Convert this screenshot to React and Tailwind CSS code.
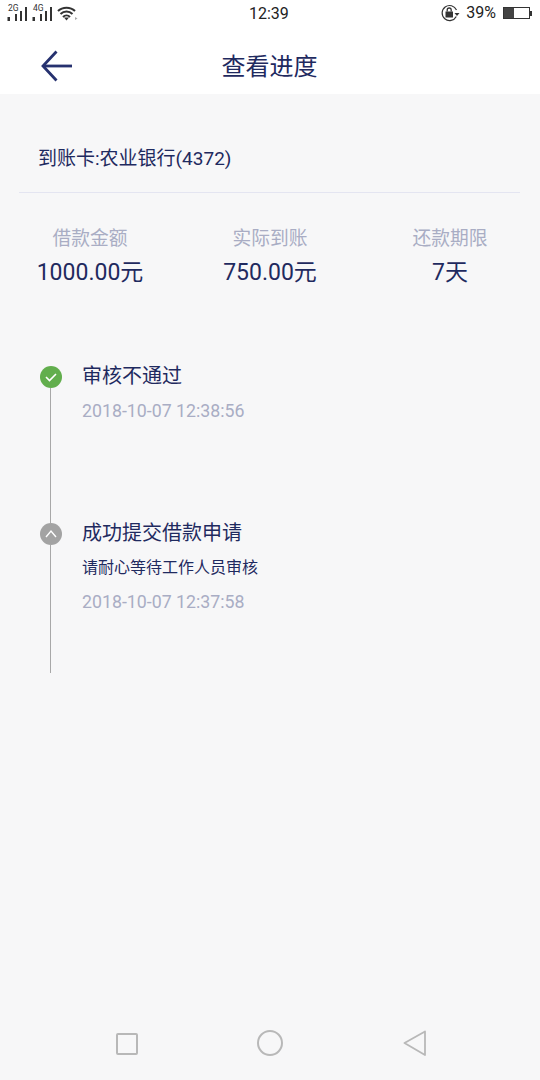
import React from "react";

const Signal = ({ label }) => (
  <div className="relative w-[25px] h-[21px] shrink-0">
    <span className="absolute left-[1px] top-[5px] text-[8.5px] leading-[7px] text-[#333]">{label}</span>
    <svg width="25" height="21" viewBox="0 0 25 21" className="absolute left-0 top-0">
      <rect x="0.500" y="17" width="2.500" height="4" fill="#333" />
      <rect x="8" y="14" width="2" height="7" fill="#333" />
      <rect x="13" y="11" width="2" height="10" fill="#333" />
      <rect x="18" y="7" width="2" height="14" fill="#333" />
    </svg>
  </div>
);

const Stat = ({ label, value }) => (
  <div className="w-[180px] flex flex-col items-center">
    <div className="text-[18.75px] leading-[28px] text-[#a9adc4]">{label}</div>
    <div className="text-[23px] leading-[30px] mt-[5px] text-[#1f2a5f]">{value}</div>
  </div>
);

const Step = ({ height, icon, title, sub, time, color }) => (
  <div className="flex" style={{ height }}>
    <div className="w-[82px] flex flex-col pl-[40px] shrink-0">
      <div className={`w-[22px] h-[22px] rounded-full flex items-center justify-center shrink-0 ${color}`}>{icon}</div>
      <div className="w-[1px] flex-1 ml-[10px] bg-[#a8a8a8]" />
    </div>
    <div className="flex flex-col">
      <div className="text-[20px] leading-[22px] -mt-[1px] text-[#1f2a5f]">{title}</div>
      {sub && <div className="text-[16px] leading-[20px] mt-[14px] text-[#1f2a5f]">{sub}</div>}
      <div className="text-[17.75px] leading-[20px] text-[#a9adc4] mt-[14px]">{time}</div>
    </div>
  </div>
);

export default function App() {
  return (
    <div
      className="w-[540px] h-[1080px] flex flex-col bg-[#f7f7f8] overflow-hidden"
      style={{ fontFamily: 'Roboto, "Noto Sans CJK SC", sans-serif' }}
    >
      <div className="bg-white h-[94px] shrink-0 flex flex-col">
        <div className="h-[28px] relative flex items-start pl-[7px]">
          <Signal label="2G" />
          <Signal label="4G" />
          <svg width="21" height="15" viewBox="0 0 21 15" className="ml-[0px] mt-[6px]" fill="none" stroke="#333" strokeWidth="2">
            <path d="M1 5 C5.500 0.500 13.500 0.500 18 5" />
            <path d="M3.500 8 C7 4.500 12 4.500 15.500 8" />
            <path d="M6 11 C8 9 11 9 13 11" />
            <path d="M7 11.500 L9.500 14.500 L12 11.500 Z" fill="#333" stroke="none" />
            <path d="M18 11 L18 14 L20.500 12.500 Z" fill="#aaa" stroke="none" />
          </svg>
          <div className="absolute left-[249px] top-[4px] text-[16px] leading-[20px] text-[#222]">12:39</div>
          <div className="absolute right-[8px] top-[3px] flex items-center">
            <svg width="20" height="18" viewBox="0 0 20 18" fill="none">
              <path d="M15.300 12.500 A7.500 7.500 0 1 1 15.500 6" stroke="#333" strokeWidth="1.200" />
              <path d="M13.500 9 L18.500 9 L16 12 Z" fill="#333" />
              <rect x="4.500" y="7.500" width="7.500" height="6" fill="#333" />
              <path d="M6.200 7.500 V6 A2 2 0 0 1 10.200 6 V7.500" stroke="#333" strokeWidth="1.300" />
            </svg>
            <span className="text-[16px] leading-[20px] text-[#222] ml-[5px]">39%</span>
            <div className="ml-[7px] w-[27px] h-[12px] border border-[#333] flex">
              <div className="w-[10px] h-full bg-[#444]" />
            </div>
            <div className="w-[2px] h-[5px] bg-[#333]" />
          </div>
        </div>
        <div className="flex-1 relative flex items-center justify-center">
          <svg width="32" height="32" viewBox="0 0 32 32" className="absolute left-[41px] top-[22px]" fill="none" stroke="#26316f" strokeWidth="2.800">
            <path d="M31 16 H2" />
            <path d="M15.500 1.500 L2 16 L15.500 30.500" />
          </svg>
          <div className="text-[24px] leading-[32px] text-[#1f2a5f] mt-[12px] -ml-[1px]">查看进度</div>
        </div>
      </div>

      <div className="px-[19px]">
        <div className="h-[99px] w-[501px] border-b border-[#e4e5f1] pl-[19px] pt-[52px] text-[19px] leading-[26px] text-[#1f2a5f]">
          到账卡:农业银行(4372)
        </div>
      </div>

      <div className="flex mt-[32px]">
        <Stat label="借款金额" value="1000.00元" />
        <Stat label="实际到账" value="750.00元" />
        <Stat label="还款期限" value="7天" />
      </div>

      <div className="mt-[78px] flex flex-col">
        <Step
          height={157}
          color="bg-[#62ae4d]"
          title="审核不通过"
          time="2018-10-07 12:38:56"
          icon={
            <svg width="14" height="12" viewBox="0 0 14 12" fill="none" stroke="#fff" strokeWidth="1.600">
              <path d="M2 6 L5.500 9.500 L12 3" />
            </svg>
          }
        />
        <Step
          height={150}
          color="bg-[#a3a3a3]"
          title="成功提交借款申请"
          sub="请耐心等待工作人员审核"
          time="2018-10-07 12:37:58"
          icon={
            <svg width="14" height="12" viewBox="0 0 14 12" fill="none" stroke="#fff" strokeWidth="1.400">
              <path d="M2 9 L7 3 L12 9" />
            </svg>
          }
        />
      </div>

      <div className="mt-auto h-[72px] flex items-start justify-between pl-[116px] pr-[114px] pt-[22px]">
        <div className="w-[22px] h-[22px] mt-[3px] rounded-[2px] border-2 border-[#b8b8b8]" />
        <div className="w-[26px] h-[26px] rounded-full border-2 border-[#b8b8b8]" />
        <svg width="24" height="26" viewBox="0 0 24 26" fill="none" stroke="#b8b8b8" strokeWidth="1.800" strokeLinejoin="round">
          <path d="M23 1.500 L2.500 13 L23 25 Z" />
        </svg>
      </div>
    </div>
  );
}
